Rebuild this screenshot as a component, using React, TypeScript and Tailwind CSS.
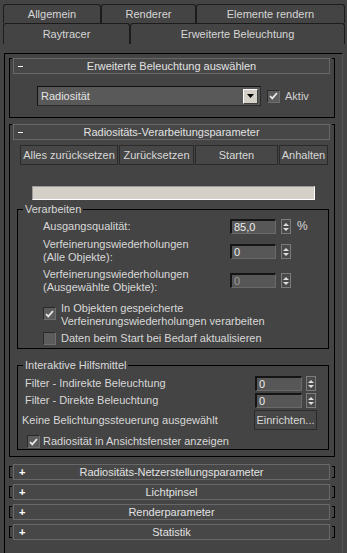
import React from "react";

// 3ds Max render setup panel, "Erweiterte Beleuchtung" tab

const Tab = ({ w, h, children }: { w: string; h: string; children: React.ReactNode }) => (
    <div className={`${w} ${h} border-t border-l border-r border-[#1c1c1c] rounded-t-[3px] flex items-center justify-center text-[#d6d6d6]`}>
        {children}
    </div>
);

const Spinner = () => (
    <div className="w-[10px] h-[15px] border border-[#7c7c7c] bg-[#4a4a4a] flex flex-col items-center justify-center gap-[2px]">
        <svg width="6" height="3" viewBox="0 0 6 3"><path d="M3 0L6 3H0z" fill="#dedede" /></svg>
        <svg width="6" height="3" viewBox="0 0 6 3"><path d="M0 0h6L3 3z" fill="#dedede" /></svg>
    </div>
);

const Field = ({ value, w = "w-[46px]", dim = false }: { value: string; w?: string; dim?: boolean }) => (
    <div className={`${w} h-[15px] bg-[#575757] border-t-2 border-l-2 border-t-[#151515] border-l-[#151515] border-r border-b border-r-[#6a6a6a] border-b-[#6a6a6a] flex items-center pl-[2px] leading-none ${dim ? "text-[#9c9c9c]" : "text-[#ececec]"}`}>
        {value}
    </div>
);

const Check = ({ checked }: { checked: boolean }) => (
    <div className="w-[13px] h-[13px] shrink-0 bg-[#5c5c5c] border border-t-[#2a2a2a] border-l-[#2a2a2a] border-r-[#6e6e6e] border-b-[#6e6e6e] flex items-center justify-center">
        {checked && (
            <svg width="9" height="8" viewBox="0 0 9 8">
                <path d="M1 4l2.3 2.4L8 1" stroke="#e8e8e8" strokeWidth="1.8" fill="none" />
            </svg>
        )}
    </div>
);

const Button = ({ w, children }: { w: string; children: React.ReactNode }) => (
    <div className={`${w} h-[20px] bg-[#474747] border border-[#2a2a2a] flex items-center justify-center text-[#d8d8d8]`}>
        {children}
    </div>
);

const Header = ({ title, sign }: { title: string; sign: "+" | "-" }) => (
    <div className="relative w-[317px] h-[16px] border border-[#686868] bg-[#474747] flex items-center justify-center text-[#e2e2e2]">
        {sign === "-" ? (
            <div className="absolute left-[4px] top-[7px] w-[5px] h-[1px] bg-white" />
        ) : (
            <div className="absolute left-[5px] top-[2px] text-white font-bold leading-[11px]">+</div>
        )}
        {title}
    </div>
);

const Rollout = ({ title, mt, pb, children }: { title: string; mt: string; pb: string; children: React.ReactNode }) => (
    <div className={`relative w-[326px] ${mt} ${pb} border-l border-r border-b border-black`}>
        <div className="absolute -left-px top-0 w-[3px] h-px bg-black" />
        <div className="absolute -right-px top-0 w-[3px] h-px bg-black" />
        <div className="-mt-[8px] ml-[3px]">
            <Header title={title} sign="-" />
        </div>
        {children}
    </div>
);

const Collapsed = ({ title }: { title: string }) => (
    <div className="flex items-center h-[16px]">
        <div className="w-[3px] h-[12px] border-l border-t border-b border-black" />
        <div className="ml-[1px]">
            <Header title={title} sign="+" />
        </div>
        <div className="ml-[2px] w-[3px] h-[12px] border-r border-t border-b border-black" />
    </div>
);

const Group = ({ label, mt, pb, children }: { label: string; mt: string; pb: string; children: React.ReactNode }) => (
    <div className={`relative ml-[7px] w-[312px] ${mt} ${pb} border border-black`}>
        <div className="absolute left-[5px] -top-[7px] px-[2px] bg-[#444444] leading-[13px] text-[#d8d8d8]">{label}</div>
        {children}
    </div>
);

export default function App() {
    return (
        <div className="w-[347px] h-[553px] bg-[#444444] overflow-hidden font-['Liberation_Sans',Arial,sans-serif] text-[11px] leading-[13px] text-[#d8d8d8]">
            {/* Tabs */}
            <div className="flex pl-[3px] pt-[4px]">
                <Tab w="w-[98px]" h="h-[19px]">Allgemein</Tab>
                <Tab w="w-[95px]" h="h-[19px]">Renderer</Tab>
                <Tab w="w-[149px]" h="h-[19px]">Elemente rendern</Tab>
            </div>
            <div className="flex pl-[3px]">
                <Tab w="w-[127px]" h="h-[21px]">Raytracer</Tab>
                <Tab w="w-[215px]" h="h-[21px]">Erweiterte Beleuchtung</Tab>
            </div>

            {/* Panel */}
            <div className="ml-[4px] mt-[9px] w-[339px] h-[500px] border-t border-l border-black border-r border-r-[#555555] pl-[4px] pt-[12px]">
                <Rollout title="Erweiterte Beleuchtung auswählen" mt="mt-0" pb="pb-[11px]">
                    <div className="flex items-center mt-[12px] ml-[27px]">
                        <div className="w-[224px] h-[20px] bg-[#595959] border border-t-[#111111] border-l-[#111111] border-r-[#2a2a2a] border-b-[#2a2a2a] flex items-center justify-between pl-[3px] pr-[2px] text-[#e4e4e4]">
                            <span>Radiosität</span>
                            <div className="w-[15px] h-[15px] bg-[#d4d0c8] border border-t-white border-l-white border-r-[#404040] border-b-[#404040] flex items-center justify-center">
                                <svg width="7" height="4" viewBox="0 0 7 4"><path d="M0 0h7L3.5 4z" fill="#000" /></svg>
                            </div>
                        </div>
                        <div className="ml-[6px]"><Check checked /></div>
                        <span className="ml-[5px] text-[#d0d0d0]">Aktiv</span>
                    </div>
                </Rollout>

                <Rollout title="Radiositäts-Verarbeitungsparameter" mt="mt-[14px]" pb="pb-[6px]">
                    <div className="flex gap-[1px] mt-[5px] ml-[10px]">
                        <Button w="w-[98px]">Alles zurücksetzen</Button>
                        <Button w="w-[75px]">Zurücksetzen</Button>
                        <Button w="w-[83px]">Starten</Button>
                        <Button w="w-[49px]">Anhalten</Button>
                    </div>
                    <div className="mt-[21px] ml-[22px] w-[283px] h-[14px] bg-[#d4d0c8] border border-t-[#9a9a9a] border-l-[#9a9a9a] border-r-white border-b-white" />

                    <Group label="Verarbeiten" mt="mt-[9px]" pb="pb-[3px]">
                        <div className="flex items-center mt-[9px] pl-[25px]">
                            <span className="w-[187px]">Ausgangsqualität:</span>
                            <Field value="85,0" />
                            <div className="ml-[5px]"><Spinner /></div>
                            <span className="ml-[6px] text-[12px]">%</span>
                        </div>
                        <div className="flex items-start mt-[4px] pl-[25px]">
                            <span className="w-[187px]">Verfeinerungswiederholungen<br />(Alle Objekte):</span>
                            <div className="mt-[6px] flex">
                                <Field value="0" />
                                <div className="ml-[5px]"><Spinner /></div>
                            </div>
                        </div>
                        <div className="flex items-start mt-[4px] pl-[25px]">
                            <span className="w-[187px]">Verfeinerungswiederholungen<br />(Ausgewählte Objekte):</span>
                            <div className="mt-[5px] flex">
                                <Field value="0" dim />
                                <div className="ml-[5px]"><Spinner /></div>
                            </div>
                        </div>
                        <div className="flex items-start mt-[8px] pl-[25px]">
                            <div className="mt-[5px]"><Check checked /></div>
                            <span className="ml-[5px]">In Objekten gespeicherte<br />Verfeinerungswiederholungen verarbeiten</span>
                        </div>
                        <div className="flex items-center mt-[4px] pl-[25px]">
                            <Check checked={false} />
                            <span className="ml-[5px]">Daten beim Start bei Bedarf aktualisieren</span>
                        </div>
                    </Group>

                    <Group label="Interaktive Hilfsmittel" mt="mt-[16px]" pb="pb-[1px]">
                        <div className="flex items-center mt-[10px] pl-[7px]">
                            <span className="w-[230px]">Filter - Indirekte Beleuchtung</span>
                            <Field value="0" w="w-[47px]" />
                            <div className="ml-[4px]"><Spinner /></div>
                        </div>
                        <div className="flex items-center mt-[2px] pl-[7px]">
                            <span className="w-[230px]">Filter - Direkte Beleuchtung</span>
                            <Field value="0" w="w-[47px]" />
                            <div className="ml-[4px]"><Spinner /></div>
                        </div>
                        <div className="flex items-center mt-[2px] pl-[4px]">
                            <span className="w-[232px]">Keine Belichtungssteuerung ausgewählt</span>
                            <Button w="w-[63px]">Einrichten...</Button>
                        </div>
                        <div className="flex items-center mt-[5px] pl-[9px]">
                            <Check checked />
                            <span className="ml-[3px]">Radiosität in Ansichtsfenster anzeigen</span>
                        </div>
                    </Group>
                </Rollout>

                <div className="mt-[7px] flex flex-col gap-[4px]">
                    <Collapsed title="Radiositäts-Netzerstellungsparameter" />
                    <Collapsed title="Lichtpinsel" />
                    <Collapsed title="Renderparameter" />
                    <Collapsed title="Statistik" />
                </div>
            </div>
        </div>
    );
}
